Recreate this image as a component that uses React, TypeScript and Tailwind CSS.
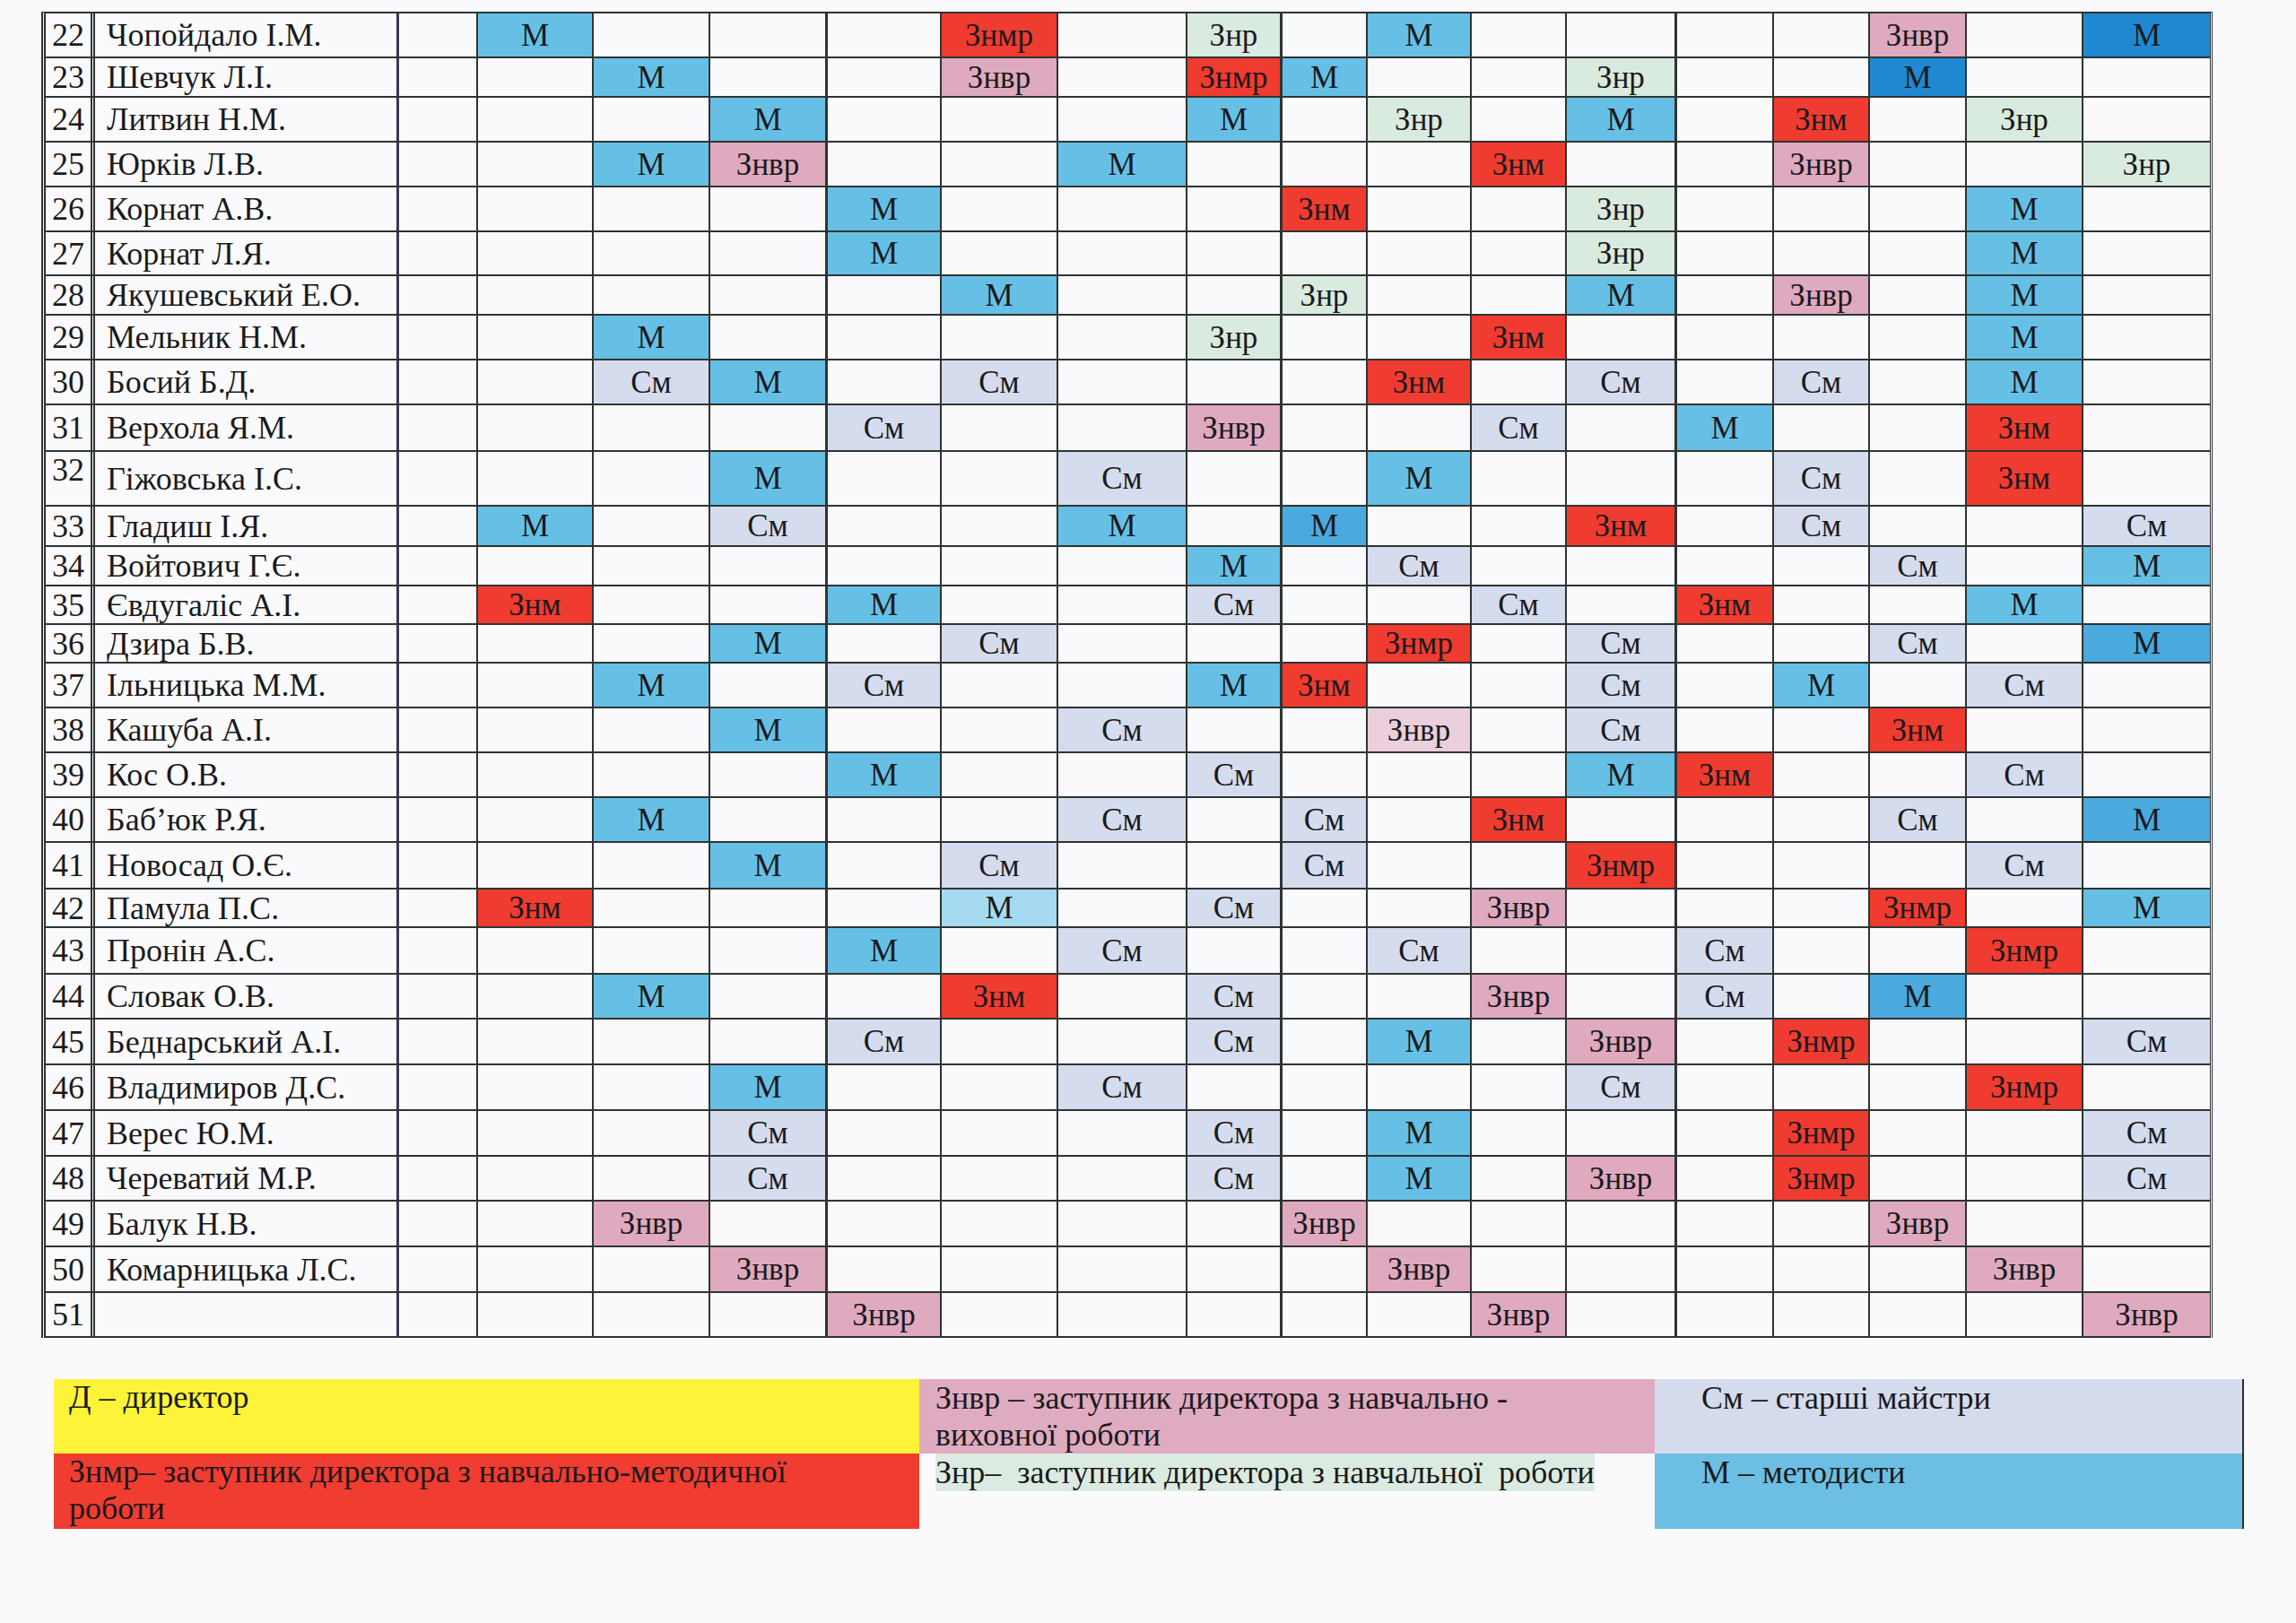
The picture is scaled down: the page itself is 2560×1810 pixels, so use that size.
type Row = [number, string, string, Record<number, string>];

const rows: Row[] = [
  [22, "Чопойдало І.М.", "h-[50px]", { 1: "М", 5: "Знмр", 7: "Знр", 9: "М", 14: "Знвр", 16: "М!" }],
  [23, "Шевчук Л.І.", "h-[44px]", { 2: "М", 5: "Знвр", 7: "Знмр", 8: "М", 11: "Знр", 14: "М!" }],
  [24, "Литвин Н.М.", "h-[50px]", { 3: "М", 7: "М", 9: "Знр", 11: "М", 13: "Знм", 15: "Знр" }],
  [25, "Юрків Л.В.", "h-[50px]", { 2: "М", 3: "Знвр", 6: "М", 10: "Знм", 13: "Знвр", 16: "Знр" }],
  [26, "Корнат А.В.", "h-[50px]", { 4: "М", 8: "Знм", 11: "Знр", 15: "М" }],
  [27, "Корнат Л.Я.", "h-[49px]", { 4: "М", 11: "Знр", 15: "М" }],
  [28, "Якушевський Е.О.", "h-[44px]", { 5: "М", 8: "Знр", 11: "М", 13: "Знвр", 15: "М" }],
  [29, "Мельник Н.М.", "h-[50px]", { 2: "М", 7: "Знр", 10: "Знм", 15: "М" }],
  [30, "Босий Б.Д.", "h-[50px]", { 2: "См", 3: "М", 5: "См", 9: "Знм", 11: "См", 13: "См", 15: "М" }],
  [31, "Верхола Я.М.", "h-[52px]", { 4: "См", 7: "Знвр", 10: "См", 12: "М", 15: "Знм" }],
  [32, "Гіжовська І.С.", "h-[61px]", { 3: "М", 6: "См", 9: "М", 13: "См", 15: "Знм" }],
  [33, "Гладиш І.Я.", "h-[45px]", { 1: "М", 3: "См", 6: "М", 8: "М+", 11: "Знм", 13: "См", 16: "См" }],
  [34, "Войтович Г.Є.", "h-[44px]", { 7: "М", 9: "См", 14: "См", 16: "М" }],
  [35, "Євдугаліс А.І.", "h-[43px]", { 1: "Знм", 4: "М", 7: "См", 10: "См", 12: "Знм", 15: "М" }],
  [36, "Дзира Б.В.", "h-[43px]", { 3: "М", 5: "См", 9: "Знмр", 11: "См", 14: "См", 16: "М+" }],
  [37, "Ільницька М.М.", "h-[50px]", { 2: "М", 4: "См", 7: "М", 8: "Знм", 11: "См", 13: "М", 15: "См" }],
  [38, "Кашуба А.І.", "h-[50px]", { 3: "М", 6: "См", 9: "Знвр-", 11: "См", 14: "Знм" }],
  [39, "Кос О.В.", "h-[50px]", { 4: "М", 7: "См", 11: "М", 12: "Знм", 15: "См" }],
  [40, "Баб’юк Р.Я.", "h-[50px]", { 2: "М", 6: "См", 8: "См", 10: "Знм", 14: "См", 16: "М+" }],
  [41, "Новосад О.Є.", "h-[52px]", { 3: "М", 5: "См", 8: "См", 11: "Знмр", 15: "См" }],
  [42, "Памула П.С.", "h-[43px]", { 1: "Знм", 5: "М-", 7: "См", 10: "Знвр", 14: "Знмр", 16: "М" }],
  [43, "Пронін А.С.", "h-[52px]", { 4: "М", 6: "См", 9: "См", 12: "См", 15: "Знмр" }],
  [44, "Словак О.В.", "h-[50px]", { 2: "М", 5: "Знм", 7: "См", 10: "Знвр", 12: "См", 14: "М+" }],
  [45, "Беднарський А.І.", "h-[51px]", { 4: "См", 7: "См", 9: "М", 11: "Знвр", 13: "Знмр", 16: "См" }],
  [46, "Владимиров Д.С.", "h-[51px]", { 3: "М", 6: "См", 11: "См", 15: "Знмр" }],
  [47, "Верес Ю.М.", "h-[51px]", { 3: "См", 7: "См", 9: "М", 13: "Знмр", 16: "См" }],
  [48, "Череватий М.Р.", "h-[50px]", { 3: "См", 7: "См", 9: "М", 11: "Знвр", 13: "Знмр", 16: "См" }],
  [49, "Балук Н.В.", "h-[51px]", { 2: "Знвр", 8: "Знвр", 14: "Знвр" }],
  [50, "Комарницька Л.С.", "h-[51px]", { 3: "Знвр", 9: "Знвр", 15: "Знвр" }],
  [51, "", "h-[50px]", { 4: "Знвр", 10: "Знвр", 16: "Знвр" }],
];

const fills: Record<string, string> = {
  "М": "bg-[#66c0e6]",
  "М+": "bg-[#4aa9dd]",
  "М!": "bg-[#1f89d2]",
  "М-": "bg-[#a6daf1]",
  "См": "bg-[#d5dcee]",
  "Знвр": "bg-[#dfa9bf]",
  "Знвр-": "bg-[#ebcfdc]",
  "Знр": "bg-[#d9eadf]",
  "Знм": "bg-[#f03b30]",
  "Знмр": "bg-[#f03b30]",
};

// right border of each data column; group separators after c3, c7, c11
const colBorders = [
  "border-r-2",
  "border-r-2",
  "border-r-2",
  "border-r-[3px]",
  "border-r-2",
  "border-r-2",
  "border-r-2",
  "border-r-[3px]",
  "border-r-2",
  "border-r-2",
  "border-r-2",
  "border-r-[3px]",
  "border-r-2",
  "border-r-2",
  "border-r-2",
  "border-r-2",
  "",
];

const grid =
  "grid grid-cols-[55px_339px_88px_129px_130px_131px_127px_130px_144px_106px_95px_116px_106px_123px_108px_107px_108px_130px_141px]";

function TableRow({ row }: { row: Row }) {
  const [num, name, h, cells] = row;
  return (
    <div className={`${grid} ${h} border-b-2 border-[#2f3432]`}>
      <div
        className={`flex justify-center text-[36px] border-r-[5px] border-double border-[#2f3432] ${
          num === 32 ? "items-start pt-[2px]" : "items-center"
        }`}
      >
        {num}
      </div>
      <div className="flex items-center pl-[13px] text-[36px] border-r-[3px] border-[#3e3656] whitespace-nowrap">
        {name}
      </div>
      {Array.from({ length: 17 }, (_, i) => {
        const code = cells[i];
        const label = code ? code.replace(/[!+\-]/g, "") : "";
        return (
          <div
            key={i}
            className={`flex items-center justify-center border-[#2f3432] ${colBorders[i]} ${
              code ? fills[code] : ""
            }`}
          >
            {label}
          </div>
        );
      })}
    </div>
  );
}

export default function App() {
  return (
    <div className="w-[2560px] min-h-[1810px] bg-[#fafafc] pt-[13px] font-['Liberation_Serif','DejaVu_Serif',serif] text-[#1a1a1c]">
      <div className="ml-[46px] w-fit border-l-[5px] border-double border-t-2 border-r-[3px] border-[#2f3432] text-[35px] leading-none">
        {rows.map((r) => (
          <TableRow key={r[0]} row={r} />
        ))}
      </div>

      <div className="ml-[60px] mt-[46px] grid grid-cols-[965px_820px_657px] grid-rows-[83px_84px] text-[36px] leading-[41px]">
        <div className="bg-[#fdf43a] pl-[17px]">Д – директор</div>
        <div className="bg-[#dfabc0] pl-[18px] pt-[1px]">
          Знвр – заступник директора з навчально -
          <br />
          виховної роботи
        </div>
        <div className="bg-[#d4dbec] pl-[52px] pt-[1px] border-r-2 border-[#2d2d2d]">
          См – старші майстри
        </div>
        <div className="bg-[#f03c31] pl-[17px]">
          Знмр– заступник директора з навчально-методичної
          <br />
          роботи
        </div>
        <div className="pl-[18px]">
          <span className="inline-block bg-[#dcebe1] leading-[42px] whitespace-pre">
            Знр–  заступник директора з навчальної  роботи
          </span>
        </div>
        <div className="bg-[#6cbfe2] pl-[52px] pt-[1px] border-r-2 border-[#2d2d2d]">
          М – методисти
        </div>
      </div>
    </div>
  );
}
